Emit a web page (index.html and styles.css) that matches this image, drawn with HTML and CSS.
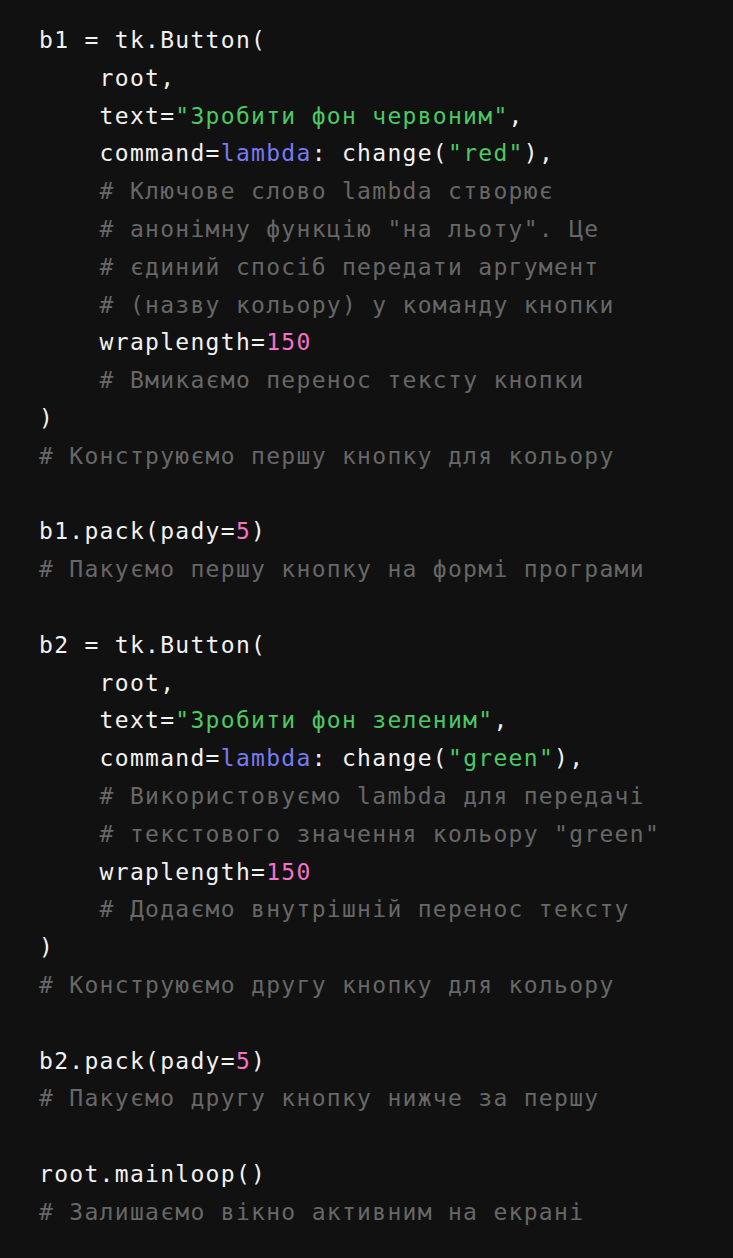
FILE: index.html
```html
<!DOCTYPE html>
<html lang="uk">
<head>
<meta charset="utf-8">
<title>Code</title>
<link rel="stylesheet" href="styles.css">
</head>
<body>
<pre class="code"><code>b1 = tk.Button(
    root,
    text=<span class="s">"Зробити фон червоним"</span>,
    command=<span class="k">lambda</span>: change(<span class="s">"red"</span>),
    <span class="c"># Ключове слово lambda створює</span>
    <span class="c"># анонімну функцію "на льоту". Це</span>
    <span class="c"># єдиний спосіб передати аргумент</span>
    <span class="c"># (назву кольору) у команду кнопки</span>
    wraplength=<span class="n">150</span>
    <span class="c"># Вмикаємо перенос тексту кнопки</span>
)
<span class="c"># Конструюємо першу кнопку для кольору</span>

b1.pack(pady=<span class="n">5</span>)
<span class="c"># Пакуємо першу кнопку на формі програми</span>

b2 = tk.Button(
    root,
    text=<span class="s">"Зробити фон зеленим"</span>,
    command=<span class="k">lambda</span>: change(<span class="s">"green"</span>),
    <span class="c"># Використовуємо lambda для передачі</span>
    <span class="c"># текстового значення кольору "green"</span>
    wraplength=<span class="n">150</span>
    <span class="c"># Додаємо внутрішній перенос тексту</span>
)
<span class="c"># Конструюємо другу кнопку для кольору</span>

b2.pack(pady=<span class="n">5</span>)
<span class="c"># Пакуємо другу кнопку нижче за першу</span>

root.mainloop()
<span class="c"># Залишаємо вікно активним на екрані</span></code></pre>
</body>
</html>
```

FILE: styles.css
```css
html, body {
  margin: 0;
  padding: 0;
  background: #111111;
}

.code {
  margin: 0;
  padding: 22px 0 20px 39px;
  font-family: "DejaVu Sans Mono", "Liberation Mono", monospace;
  font-size: 23px;
  line-height: 37.8px;
  letter-spacing: 1.3px;
  color: #f2f2f2;
  white-space: pre;
  background: #111111;
}

.code code {
  font-family: inherit;
}

.c {
  color: #676767;
}

.s {
  color: #4cc963;
}

.k {
  color: #7a7af0;
}

.n {
  color: #f472c8;
}
```
